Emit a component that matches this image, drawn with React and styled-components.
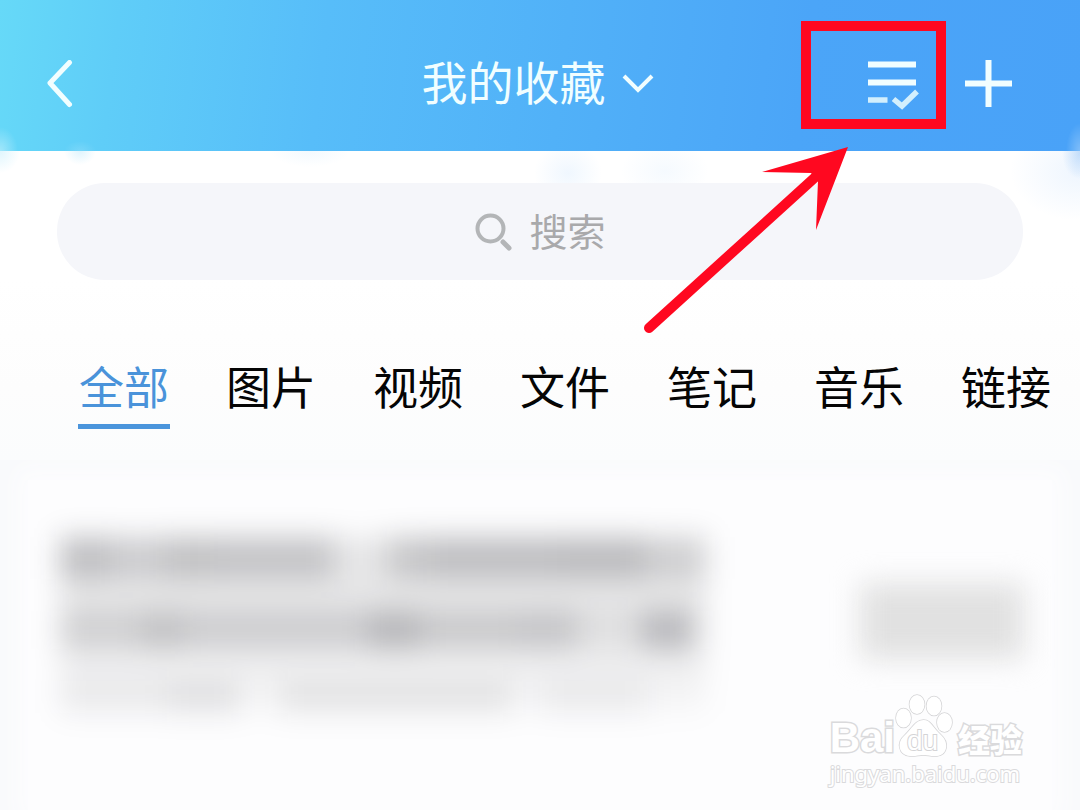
import React, { useState } from "react";
import styled, { createGlobalStyle } from "styled-components";

const sans = `"Noto Sans CJK SC", "Noto Sans", sans-serif`;
const red = "#ff0820";
const ice = "#f1feff";

const GlobalStyle = createGlobalStyle`
  *, *::before, *::after { box-sizing: border-box; }
  body { margin: 0; background: #fdfdfe; font-family: ${sans}; }
  button, input { font: inherit; color: inherit; border: 0; background: none; padding: 0; margin: 0; }
  button { cursor: pointer; }
  svg { display: block; }
`;

const Page = styled.div`
  position: relative;
  display: flex;
  flex-direction: column;
  min-height: 100vh;
  overflow: hidden;
`;

const Header = styled.header`
  display: grid;
  grid-template-columns: 1fr auto 1fr;
  align-items: center;
  height: 151px;
  padding: 16px 51px 0 46px;
  color: ${ice};
  background:
    radial-gradient(18px 24px at 0 100%, rgba(255, 255, 255, 0.4), transparent),
    radial-gradient(16px 10px at 80px 100%, rgba(255, 255, 255, 0.15), transparent),
    radial-gradient(14px 28px at 100% 100%, rgba(255, 255, 255, 0.3), transparent),
    linear-gradient(97deg, #66d9f8 0%, #5fcdf8 11%, #57bdf9 30%, #51b1f8 52%, #4ba5f8 74%, #49a2f8 100%);
`;

const IconButton = styled.button`
  display: flex;
  justify-self: start;
`;

const TitleButton = styled.button`
  display: flex;
  align-items: center;
  gap: 16px;
`;

const Title = styled.h1`
  margin: 0;
  padding-bottom: 8px;
  font-size: 46px;
  font-weight: 400;
  line-height: 60px;
`;

const Actions = styled.div`
  display: flex;
  align-items: center;
  justify-content: flex-end;
  gap: 46px;
  padding-right: 16px;
`;

const SearchArea = styled.div`
  padding: 32px 57px 0;
  background:
    radial-gradient(20px 22px at 0 0, rgba(150, 225, 250, 0.3), transparent),
    radial-gradient(16px 14px at 80px 0, rgba(150, 220, 250, 0.3), transparent),
    radial-gradient(40px 16px at 310px 0, rgba(170, 215, 250, 0.14), transparent),
    radial-gradient(34px 30px at 568px 22px, rgba(130, 190, 250, 0.12), transparent),
    radial-gradient(44px 30px at 665px 20px, rgba(130, 190, 250, 0.08), transparent),
    radial-gradient(18px 26px at 100% 2px, rgba(120, 180, 245, 0.4), transparent),
    radial-gradient(70px 50px at 100% 20px, rgba(150, 195, 250, 0.16), transparent),
    #ffffff;
`;

const SearchBox = styled.label`
  display: flex;
  align-items: center;
  justify-content: center;
  gap: 18px;
  height: 97px;
  border-radius: 48px;
  color: #a9a9ab;
  background: #f5f6fa;
`;

const SearchInput = styled.input`
  width: 2em;
  height: 60px;
  padding-bottom: 4px;
  font-size: 38px;
  line-height: 56px;
  outline: none;
  &::placeholder {
    color: #a9a9ab;
    opacity: 1;
  }
`;

const Tabs = styled.nav`
  display: flex;
  gap: 55px;
  padding: 81px 0 31px 78px;
  overflow-x: auto;
  scrollbar-width: none;
  background: linear-gradient(#ffffff 0%, #fdfdfd 60%, #fbfcfd 100%);
`;

const Tab = styled.button`
  flex: none;
  padding: 0 1px 13px;
  border-bottom: 5px solid ${(props) => (props.$active ? "#4b95dc" : "transparent")};
  color: ${(props) => (props.$active ? "#4a93da" : "#050505")};
  font-size: 45px;
  line-height: 50px;
`;

const Feed = styled.main`
  flex: 1;
  padding: 20px 28px 0;
  background: #f9fafc;
`;

const Card = styled.article`
  display: flex;
  justify-content: space-between;
  height: 100%;
  min-height: 330px;
  padding: 57px 28px 0 32px;
  background: #fdfdfe;
  box-shadow: 0 0 20px 10px #fdfdfe;
`;

const Lines = styled.div`
  display: flex;
  flex-direction: column;
  align-self: flex-start;
  gap: 32px;
  width: 67%;
  background: linear-gradient(rgba(0, 0, 0, 0.09) 50%, rgba(0, 0, 0, 0.02) 100%);
  filter: blur(14px);
`;

const Line = styled.div`
  display: flex;
  height: ${(props) => props.$height}px;
`;

const Smudge = styled.span`
  flex: ${(props) => props.$grow} 0 0;
  background: rgba(20, 20, 30, ${(props) => props.$tone});
`;

const Thumb = styled.div`
  width: 164px;
  height: 76px;
  margin-top: 46px;
  background: #e1e1e1;
  filter: blur(14px);
`;

const Highlight = styled.svg`
  position: absolute;
  top: 0;
  right: 0;
  pointer-events: none;
`;

const Watermark = styled.div`
  position: absolute;
  right: 58px;
  bottom: 22px;
  color: #ffffff;
  -webkit-text-stroke: 3px #dadadc;
  paint-order: stroke fill;
`;

const Brand = styled.div`
  display: flex;
  align-items: flex-end;
  height: 64px;
`;

const Latin = styled.span`
  font: 700 42px/40px "Liberation Sans", sans-serif;
`;

const Hanzi = styled.span`
  font-size: 32px;
  font-weight: 900;
  line-height: 40px;
`;

const Site = styled.div`
  font: 400 22px/30px "Noto Sans", sans-serif;
  -webkit-text-stroke-width: 2px;
`;

const lines = [
  {
    height: 42,
    parts: [[50, 0.19], [55, 0.12], [50, 0.18], [120, 0.16], [54, 0], [40, 0.15], [130, 0.19], [90, 0.2], [60, 0.11]],
  },
  {
    height: 38,
    parts: [[78, 0.11], [40, 0.18], [175, 0.12], [50, 0.23], [90, 0.14], [60, 0.16], [60, 0.04], [50, 0.22], [12, 0]],
  },
  {
    height: 32,
    parts: [[110, 0.05], [75, 0.09], [40, 0], [240, 0.08], [30, 0], [110, 0.05], [60, 0]],
  },
];

const tabs = ["全部", "图片", "视频", "文件", "笔记", "音乐", "链接"];

function BackIcon() {
  return (
    <svg width="28" height="48" viewBox="0 0 28 48" fill="none" stroke="currentColor" strokeWidth="5" strokeLinecap="round" strokeLinejoin="round">
      <path d="M23.500 2.500 4 23 23.500 44.500" />
    </svg>
  );
}

function CaretIcon() {
  return (
    <svg width="32" height="20" viewBox="0 0 32 20" fill="none" stroke="currentColor" strokeWidth="4">
      <path d="M2 2 16 16 30 2" />
    </svg>
  );
}

function ListCheckIcon() {
  return (
    <svg width="51" height="52" viewBox="0 0 51 52" fill="none" stroke="currentColor" strokeWidth="6">
      <path d="M0 6.500H48M0 24.500H48" />
      <path d="M0 42H19.500M25.500 41 34 48 49 33.500" stroke="#d3effd" strokeWidth="5.500" />
    </svg>
  );
}

function PlusIcon() {
  return (
    <svg width="48" height="48" viewBox="0 0 48 48" fill="none" stroke="currentColor" strokeWidth="6">
      <path d="M0 23.500H47M23.500 0V47" />
    </svg>
  );
}

function SearchIcon() {
  return (
    <svg width="37" height="38" viewBox="0 0 37 38" fill="none" stroke="#b3b5b7" strokeWidth="4">
      <circle cx="15.500" cy="15.500" r="13" />
      <path d="M28 29 34 35" strokeWidth="5" strokeLinecap="round" />
    </svg>
  );
}

function Paw() {
  return (
    <svg width="63" height="64" viewBox="0 0 63 64" fill="#ffffff" stroke="#d4d4d6" strokeWidth="1.500">
      <ellipse cx="8.500" cy="24" rx="7.500" ry="9.500" />
      <ellipse cx="22" cy="10.500" rx="7.500" ry="9.500" />
      <ellipse cx="39" cy="12" rx="7.500" ry="9.500" />
      <ellipse cx="49.500" cy="28.500" rx="7.500" ry="9.500" />
      <path d="M28.500 26C36 26 38 34 46 41C54 48 53 61 42 62C36 62.500 33 61 28.500 61C24 61 20 62.500 15 62C3 61 2 48 9 42C17 35 20 26 28.500 26Z" />
      <text x="12" y="56" fontFamily="Liberation Sans, sans-serif" fontSize="28" strokeWidth="2">
        du
      </text>
    </svg>
  );
}

function App() {
  const [active, setActive] = useState(tabs[0]);

  return (
    <Page>
      <GlobalStyle />
      <Header>
        <IconButton aria-label="返回">
          <BackIcon />
        </IconButton>
        <TitleButton>
          <Title>我的收藏</Title>
          <CaretIcon />
        </TitleButton>
        <Actions>
          <IconButton aria-label="多选">
            <ListCheckIcon />
          </IconButton>
          <IconButton aria-label="添加">
            <PlusIcon />
          </IconButton>
        </Actions>
      </Header>
      <SearchArea>
        <SearchBox>
          <SearchIcon />
          <SearchInput type="text" placeholder="搜索" aria-label="搜索" />
        </SearchBox>
      </SearchArea>
      <Tabs>
        {tabs.map((name) => (
          <Tab key={name} $active={name === active} onClick={() => setActive(name)}>
            {name}
          </Tab>
        ))}
      </Tabs>
      <Feed>
        <Card>
          <Lines>
            {lines.map((line, i) => (
              <Line key={i} $height={line.height}>
                {line.parts.map(([grow, tone], j) => (
                  <Smudge key={j} $grow={grow} $tone={tone} />
                ))}
              </Line>
            ))}
          </Lines>
          <Thumb />
        </Card>
      </Feed>
      <Highlight width="440" height="340" viewBox="640 0 440 340" aria-hidden="true">
        <rect x="806" y="26" width="135" height="98" fill="none" stroke={red} strokeWidth="10" />
        <path d="M649 328 822 171" stroke={red} strokeWidth="10" strokeLinecap="round" />
        <path d="M848 147 762 172 811 173 818 181 816 230Z" fill={red} />
      </Highlight>
      <Watermark>
        <Brand>
          <Latin>Bai</Latin>
          <Paw />
          <Hanzi>经验</Hanzi>
        </Brand>
        <Site>jingyan.baidu.com</Site>
      </Watermark>
    </Page>
  );
}

export default App;
